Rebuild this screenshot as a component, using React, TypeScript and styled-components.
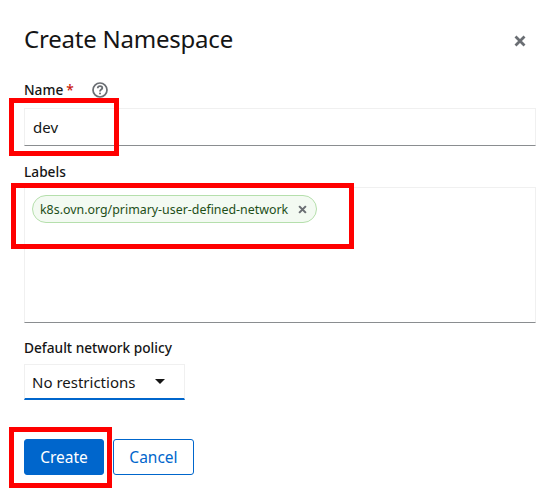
import React from "react";
import styled, { createGlobalStyle } from "styled-components";

const GlobalStyle = createGlobalStyle`
  html, body {
    margin: 0;
    padding: 0;
    background: #fff;
    font-family: "Noto Sans", "Open Sans", sans-serif;
    color: #151515;
  }
`;

const Modal = styled.div`
  position: relative;
  width: 559px;
  height: 499px;
  box-sizing: border-box;
  padding: 23px 23px 0 24px;
  overflow: hidden;
`;

const Header = styled.div`
  display: flex;
  align-items: center;
  justify-content: space-between;
  height: 32px;
  margin-bottom: 26px;
`;

const Title = styled.h1`
  margin: 0;
  font-size: 24px;
  font-weight: 400;
  line-height: 32px;
  letter-spacing: -0.22px;
`;

const CloseButton = styled.button`
  display: flex;
  margin: 4px 10px 0 0;
  padding: 0;
  border: 0;
  background: none;
  color: #6a6e73;
`;

const Field = styled.div<{ $gap: number }>`
  margin-bottom: ${(p) => p.$gap}px;
`;

const LabelRow = styled.div<{ $gap: number }>`
  display: flex;
  align-items: center;
  height: 18px;
  margin-bottom: ${(p) => p.$gap}px;
`;

const Label = styled.label`
  font-size: 13.7px;
  font-weight: 500;
  line-height: 18px;
`;

const Required = styled.span`
  margin-left: 3px;
  color: #c9190b;
`;

const HelpIcon = styled.span`
  display: flex;
  margin-left: 18px;
  color: #6a6e73;
`;

const TextInput = styled.div`
  box-sizing: border-box;
  height: 38px;
  padding: 0 8px;
  border: 1px solid #f0f0f0;
  border-bottom-color: #8a8d90;
  font-size: 15px;
  line-height: 36px;
`;

const LabelsBox = styled.div`
  box-sizing: border-box;
  height: 136px;
  padding: 7px;
  border: 1px solid #f0f0f0;
  border-bottom-color: #8a8d90;
`;

const Chip = styled.span`
  display: inline-flex;
  align-items: center;
  box-sizing: border-box;
  height: 28px;
  padding: 0 9px 0 7px;
  border: 1px solid #b5dfac;
  border-radius: 14px;
  background: #f3faf2;
  color: #1e4f18;
  font-size: 12.4px;
  white-space: nowrap;
`;

const ChipClose = styled.span`
  display: flex;
  margin-left: 10px;
  color: #6a6e73;
`;

const Select = styled.div`
  display: flex;
  align-items: center;
  justify-content: space-between;
  box-sizing: border-box;
  width: 161px;
  height: 36px;
  padding: 0 19px 0 7px;
  border: 1px solid #f0f0f0;
  border-bottom: 2px solid #06c;
  font-size: 15px;
`;

const Caret = styled.span`
  width: 0;
  height: 0;
  border-left: 5px solid transparent;
  border-right: 5px solid transparent;
  border-top: 5px solid #151515;
`;

const Actions = styled.div`
  display: flex;
  gap: 9px;
  margin-top: 39px;
`;

const Button = styled.button<{ $primary?: boolean }>`
  box-sizing: border-box;
  width: ${(p) => (p.$primary ? "80px" : "81px")};
  height: 36px;
  padding: 0;
  border: 1px solid #06c;
  border-radius: 3px;
  background: ${(p) => (p.$primary ? "#06c" : "#fff")};
  color: ${(p) => (p.$primary ? "#fff" : "#06c")};
  font-family: inherit;
  font-size: 15.5px;
`;

const Annotation = styled.div<{ $x: number; $y: number; $w: number; $h: number }>`
  position: absolute;
  left: ${(p) => p.$x}px;
  top: ${(p) => p.$y}px;
  width: ${(p) => p.$w}px;
  height: ${(p) => p.$h}px;
  box-sizing: border-box;
  border: 5px solid #ff0000;
`;

const Times = ({ size }: { size: number }) => (
  <svg width={size} height={size} viewBox="0 0 12 12" fill="none" stroke="currentColor" strokeWidth="2.8">
    <path d="M1.5 1.5 L10.5 10.5 M10.5 1.5 L1.5 10.5" />
  </svg>
);

const Help = () => (
  <svg width="16" height="16" viewBox="0 0 16 16" fill="none" stroke="currentColor">
    <circle cx="8" cy="8" r="7" strokeWidth="1.7" />
    <path d="M5.7 6.2 C5.8 4.8 6.8 4.1 8 4.1 C9.3 4.1 10.3 4.9 10.3 6 C10.3 7.5 8 7.6 8 9.4" strokeWidth="1.8" />
    <circle cx="8" cy="11.6" r="1" fill="currentColor" stroke="none" />
  </svg>
);

export default function App() {
  return (
    <Modal>
      <GlobalStyle />
      <Header>
        <Title>Create Namespace</Title>
        <CloseButton>
          <Times size={12} />
        </CloseButton>
      </Header>
      <Field $gap={17}>
        <LabelRow $gap={9}>
          <Label>
            Name<Required>*</Required>
          </Label>
          <HelpIcon>
            <Help />
          </HelpIcon>
        </LabelRow>
        <TextInput>dev</TextInput>
      </Field>
      <Field $gap={16}>
        <LabelRow $gap={6}>
          <Label>Labels</Label>
        </LabelRow>
        <LabelsBox>
          <Chip>
            k8s.ovn.org/primary-user-defined-network
            <ChipClose>
              <Times size={9} />
            </ChipClose>
          </Chip>
        </LabelsBox>
      </Field>
      <Field $gap={0}>
        <LabelRow $gap={7}>
          <Label>Default network policy</Label>
        </LabelRow>
        <Select>
          No restrictions
          <Caret />
        </Select>
      </Field>
      <Actions>
        <Button $primary>Create</Button>
        <Button>Cancel</Button>
      </Actions>
      <Annotation $x={9} $y={98} $w={110} $h={58} />
      <Annotation $x={11} $y={183} $w={343} $h={66} />
      <Annotation $x={9} $y={427} $w={103} $h={61} />
    </Modal>
  );
}
